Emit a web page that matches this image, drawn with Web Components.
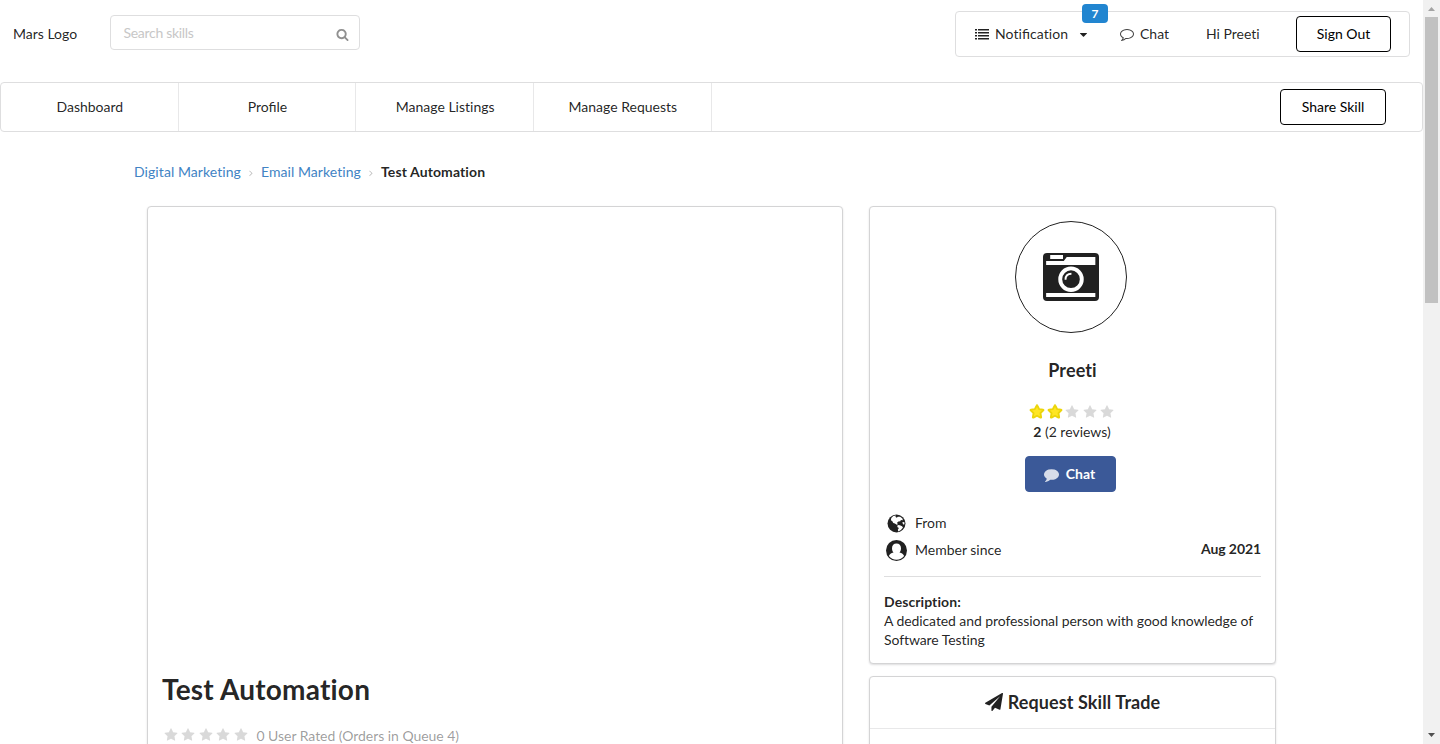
<!DOCTYPE html>
<html lang="en"><head><meta charset="utf-8"><title>Mars</title>
<style>
html,body{margin:0;height:744px;overflow:hidden;background:#fff}
body{font:14px/20px Lato,"Liberation Sans",sans-serif;color:rgba(0,0,0,.87);font-variant-ligatures:none}
</style></head><body>
<mars-page></mars-page>
<script>
const PATHS={
star:'<path d="M1728 647q0 22-26 48l-363 354 86 500q1 7 1 20 0 21-10.5 35.5t-30.5 14.5q-19 0-40-12l-449-236-449 236q-22 12-40 12-21 0-31.5-14.5t-10.5-35.5q0-6 2-20l86-500-364-354q-25-27-25-48 0-37 56-46l502-73 225-455q19-41 49-41t49 41l225 455 502 73q56 9 56 46z"/>',
search:'<path d="M1216 832q0-185-131.5-316.5t-316.5-131.5-316.5 131.5-131.5 316.5 131.5 316.5 316.5 131.5 316.5-131.5 131.5-316.5zm512 832q0 52-38 90t-90 38q-54 0-90-38l-343-342q-179 124-399 124-143 0-273.5-55.5t-225-150-150-225-55.5-273.5 55.5-273.5 150-225 225-150 273.5-55.5 273.5 55.5 225 150 150 225 55.5 273.5q0 220-124 399l343 343q37 37 37 90z"/>',
comment:'<path d="M1792 896q0 174-120 321.5t-326 233-450 85.5q-70 0-145-8-198 175-460 242-49 14-114 22-17 2-30.5-9t-17.5-29v-1q-3-4-.5-12t2-10 4.5-9.5l6-9 7-8.5 8-9q7-8 31-34.5t34.5-38 31-39.5 32.5-51 27-59 26-76q-157-89-247.5-220t-90.5-281q0-130 71-248.5t191-204.5 286-136.5 348-50.5 348 50.5 286 136.5 191 204.5 71 248.5z"/>',
commento:'<path d="M896 384q-204 0-381.5 69.5t-282 187.5-104.5 255q0 112 71.5 213.5t201.5 175.5l87 50-27 96q-24 91-70 172 152-63 275-171l43-38 57 6q69 8 130 8 204 0 381.5-69.5t282-187.5 104.5-255-104.5-255-282-187.5-381.5-69.5zm896 512q0 174-120 321.5t-326 233-450 85.5q-70 0-145-8-198 175-460 242-49 14-114 22h-5q-15 0-27-10.5t-16-27.5v-1q-3-4-.5-12t2-10 4.5-9.5l6-9 7-8.5 8-9q7-8 31-34.5t34.5-38 31-39.5 32.5-51 27-59 26-76q-157-89-247.5-220t-90.5-281q0-174 120-321.5t326-233 450-85.5 450 85.5 326 233 120 321.5z"/>',
plane:'<path d="M1764 11q33 24 27 64l-256 1536q-5 29-32 45-14 8-31 8-11 0-24-5l-453-185-242 295q-18 23-49 23-13 0-22-4-19-7-30.5-23.5t-11.5-36.5v-349l864-1059-1069 925-395-162q-37-14-40-55-2-40 32-59l1664-960q15-9 32-9 20 0 36 11z"/>',
user:'<circle cx="896" cy="896" r="896"/><path fill="#fff" d="M896 300C1130 300 1280 440 1280 700C1280 850 1230 980 1150 1060C1370 1090 1480 1210 1545 1360C1400 1560 1160 1680 896 1680S392 1560 247 1360C312 1210 422 1090 642 1060C562 980 512 850 512 700C512 440 662 300 896 300Z"/>',
list:'<path d="M0 256h256v192H0zM0 640h256v192H0zM0 1024h256v192H0zM0 1408h256v192H0zM384 256h1408v192H384zM384 640h1408v192H384zM384 1024h1408v192H384zM384 1408h1408v192H384z"/>',
caret:'<path d="M384 640h1024q26 0 45 19t19 45-19 45l-512 512q-19 19-45 19t-45-19L339 749q-19-19-19-45t19-45 45-19z"/>',
angle:'<path d="M1171 960q0 13-10 23l-466 466q-10 10-23 10t-23-10l-50-50q-10-10-10-23t10-23l393-393-393-393q-10-10-10-23t10-23l50-50q10-10 23-10t23 10l466 466q10 10 10 23z"/>',
globe:'<circle cx="896" cy="896" r="768"/><path fill="#fff" d="M620 260L850 215L800 330L910 400L1010 310L1210 330L1400 470L1440 620L1270 590L1220 700L1060 720L940 830L1010 960L920 1010L760 900L620 860L540 700L420 620L450 430ZM1000 1030L1180 1040L1370 1120L1450 1240L1270 1460L1050 1580L1010 1420L1100 1290L960 1190ZM1390 790L1560 760L1580 960L1460 980Z"/>',
camera:'<path fill-rule="evenodd" d="M128 128H1664Q1792 128 1792 256V1536Q1792 1664 1664 1664H128Q0 1664 0 1536V256Q0 128 128 128ZM230 190H640V320H230ZM100 384H665L760 256H1675V512H100ZM100 1411H1675V1539H100Z"/><circle cx="896" cy="965" r="345" fill="none" stroke="#fff" stroke-width="125"/><path d="M720 980Q720 790 910 790" fill="none" stroke="#fff" stroke-width="60"/>'
};
function define(name,css,html){
 const t=document.createElement('template');t.innerHTML=`<style>${css}</style>${html}`;
 customElements.define(name,class extends HTMLElement{constructor(){super();this.attachShadow({mode:'open'}).append(t.content.cloneNode(true))}});
}
customElements.define('mars-icon',class extends HTMLElement{
 connectedCallback(){if(this.shadowRoot)return;const s=this.getAttribute('size')||14;
 this.attachShadow({mode:'open'}).innerHTML=`<style>:host{display:block;flex:none;width:${s}px;height:${s}px}svg{display:block;overflow:visible}</style><svg width="${s}" height="${s}" viewBox="0 0 1792 1792" fill="currentColor">${PATHS[this.getAttribute('name')]}</svg>`}
});
customElements.define('mars-rating',class extends HTMLElement{
 connectedCallback(){if(this.shadowRoot)return;const n=+this.getAttribute('value');
 this.attachShadow({mode:'open'}).innerHTML=`<style>:host{display:flex;gap:3.5px}mars-icon{color:rgba(0,0,0,.15)}.on{color:#ffe623;stroke:#ecd50a;stroke-width:240;stroke-linejoin:round}</style>`+[0,1,2,3,4].map(i=>`<mars-icon name="star" class="${i<n?'on':''}"></mars-icon>`).join('')}
});
define('mars-button',`:host{display:flex;box-sizing:border-box;height:36px;align-items:center;justify-content:center;border:1px solid #000;border-radius:4px;color:#000}`,`<slot></slot>`);
define('mars-card',`:host{display:block;box-sizing:border-box;background:#fff;border:1px solid #d4d4d5;border-radius:4px;box-shadow:0 1px 2px rgba(34,36,38,.15)}`,`<slot></slot>`);
define('mars-header',`
:host{display:flex;box-sizing:border-box;height:82px;align-items:flex-start;padding:11px 13px 0;color:rgba(0,0,0,.87)}
.logo{width:97px;margin-top:13px}
.search{display:flex;box-sizing:border-box;width:250px;height:35px;margin-top:4px;border:1px solid #dededf;border-radius:4px;align-items:center;padding:0 10px 0 12.500px;justify-content:space-between;color:#c7c7c7}
.search span{margin-top:1px;letter-spacing:-.3px}
.search mars-icon{color:#909090;margin-top:3px}
.menu{display:flex;box-sizing:border-box;width:455px;height:46px;margin-left:auto;border:1px solid #dededf;border-radius:4px;align-items:center}
.item{display:flex;align-items:center;position:relative}
.note{box-sizing:border-box;width:164px;padding-left:19px}.note span{margin-left:6px;letter-spacing:.07px}.note i{font-style:normal;font-variant-ligatures:normal;letter-spacing:0}.note .c{margin:0 0 0 10px}
.badge{position:absolute;left:126px;top:-20px;width:26px;height:19px;border-radius:4px;background:#2185d0;color:#fff;font:700 12px/19px Lato,sans-serif;text-align:center}
.chat{width:86px;gap:6px}.chat mars-icon{opacity:.85}.hi{width:90px}mars-button{width:95px}
`,`<div class="logo">Mars Logo</div><div class="search"><span style="letter-spacing:-.29px"></span><span>Search skills</span><mars-icon name="search" size="13"></mars-icon></div>
<div class="menu"><div class="item note"><mars-icon name="list"></mars-icon><span>Noti<i>fi</i>cation</span><mars-icon class="c" name="caret" size="11"></mars-icon><div class="badge">7</div></div>
<div class="item chat"><mars-icon name="commento"></mars-icon>Chat</div><div class="hi">Hi Preeti</div><mars-button>Sign Out</mars-button></div>`.replace('<span style="letter-spacing:-.29px"></span>',''));
define('mars-nav',`:host{display:flex;box-sizing:border-box;height:50px;align-items:center;border:1px solid #dededf;border-radius:4px;padding-right:36px}
.i{width:177.67px;height:48px;line-height:48px;text-align:center;box-sizing:border-box;border-right:1px solid #e8e8e9;padding-left:1px}
.lig{font-variant-ligatures:normal}
mars-button{width:106px;margin-left:auto}`,`<div class="i">Dashboard</div><div class="i lig">Profile</div><div class="i">Manage Listings</div><div class="i">Manage Requests</div><mars-button>Share Skill</mars-button>`);
define('mars-breadcrumb',`:host{display:flex;align-items:center;height:20px;padding:30px 0 24px 134px}
a{color:#4183c4;letter-spacing:.07px}mars-icon{margin:1px 5px 0;color:#bbb}b{font-weight:700;letter-spacing:.11px}`,`<a>Digital Marketing</a><mars-icon name="angle" size="10"></mars-icon><a>Email Marketing</a><mars-icon name="angle" size="10"></mars-icon><b>Test Automation</b>`);
define('mars-profile',`:host{display:flex;flex-direction:column;align-items:center;padding:14px;height:428px}
.avatar{display:flex;flex:none;box-sizing:border-box;width:112px;height:112px;border:1px solid #222;border-radius:50%;align-items:center;justify-content:center;color:#212121;margin-right:3px}
h3{font:700 18px/24px Lato,sans-serif;font-variant-ligatures:none;letter-spacing:.1px;margin:25px 0 23px}
mars-rating{margin-right:.5px}.rev{margin:3px 1px 14px 0}
mars-button{width:91px;background:#3b5998;border-color:#3b5998;color:#fff;font-weight:700;gap:7px;margin-right:4px;box-sizing:border-box;padding-right:2px}
mars-button mars-icon{opacity:.8}
.row{display:flex;align-self:stretch;align-items:center;height:27px}.row .ic{width:24px;margin:2px 7px 0 0;display:flex;justify-content:center}.row b{margin-left:auto;margin-top:-2px;letter-spacing:-.08px}
.first{margin-top:17px}.line{align-self:stretch;border-top:1px solid #dededf;margin-top:13px}
.desc{align-self:stretch;line-height:19px;margin-top:15px}.desc b{letter-spacing:.08px}.desc span{letter-spacing:-.085px}`,
`<div class="avatar"><mars-icon name="camera" size="56"></mars-icon></div><h3>Preeti</h3><mars-rating value="2"></mars-rating><div class="rev"><b>2</b> (2 reviews)</div><mars-button><mars-icon name="comment" size="15"></mars-icon>Chat</mars-button>
<div class="row first"><span class="ic"><mars-icon name="globe" size="21"></mars-icon></span>From</div><div class="row"><span class="ic"><mars-icon name="user" size="21"></mars-icon></span>Member since<b>Aug 2021</b></div><div class="line"></div><div class="desc"><b>Description:</b><br><span>A dedicated and professional person with good knowledge of Software Testing</span></div>`);
define('mars-scrollbar',`:host{display:flex;flex-direction:column;align-items:center;justify-content:space-between;width:17px;height:744px;background:#f1f1f1}
.thumb{width:13px;height:286px;background:#c1c1c1;margin-bottom:auto}svg{display:block;flex:none}`,`<svg width="17" height="17"><path fill="#a3a3a3" d="M5 11h7l-3.500-4z"/></svg><div class="thumb"></div><svg width="17" height="17"><path fill="#505050" d="M5 6h7l-3.500 4z"/></svg>`);
define('mars-page',`:host{display:flex;height:744px;overflow:hidden}main{width:1423px;height:744px;overflow:hidden}
.cols{display:flex;gap:26px;padding-left:147px;align-items:flex-start}.left{width:696px;height:600px;padding:462px 14px 0}
h1{font:700 28px/40px Lato,sans-serif;margin:0;letter-spacing:.2px}.meta{display:flex;align-items:center;gap:9px;color:rgba(0,0,0,.4);margin-top:17px}.meta mars-rating{margin:-2px 0 0 1.500px}.meta span{letter-spacing:-.04px}
.right{display:flex;flex-direction:column;gap:12px;width:407px}.prof{height:458px}.req{height:200px}
.req div{display:flex;box-sizing:border-box;height:52px;padding-bottom:2px;border-bottom:1px solid #e8e8e9;align-items:center;justify-content:center;gap:5px;font:700 18px/24px Lato,sans-serif;letter-spacing:.1px}
h1,.req div{font-variant-ligatures:none}`,
`<main><mars-header></mars-header><mars-nav></mars-nav><mars-breadcrumb></mars-breadcrumb><div class="cols"><mars-card class="left"><h1>Test Automation</h1><div class="meta"><mars-rating value="0"></mars-rating><span>0 User Rated (Orders in Queue 4)</span></div></mars-card>
<div class="right"><mars-card class="prof"><mars-profile></mars-profile></mars-card><mars-card class="req"><div><mars-icon name="plane" size="18"></mars-icon><span>Request Skill Trade</span></div></mars-card></div></div></main><mars-scrollbar></mars-scrollbar>`);
</script></body></html>
